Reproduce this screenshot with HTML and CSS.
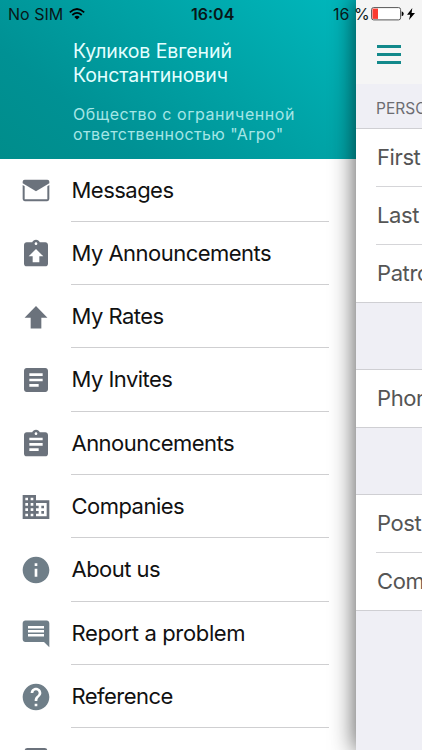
FILE: index.html
```html
<!DOCTYPE html>
<html lang="en">
<head>
<meta charset="utf-8">
<title>Menu</title>
<link rel="stylesheet" href="styles.css">
</head>
<body>
<div class="screen">
  <aside class="drawer">
    <header class="profile">
      <h1 class="name">Куликов Евгений<br>Константинович</h1>
      <p class="company"><span class="company-first">Общество с ограниченной</span><br>ответственностью "Агро"</p>
    </header>
    <nav class="menu">
      <a class="item"><svg class="icon" viewBox="0 0 24 24"><path d="M3.500 4.400h17q1.500 0 1.500 1.500v1L12 12.900 2 6.900v-1q0-1.500 1.500-1.500z"/><path d="M2 8.300l1.500.9v9.700h17V9.200l1.500-.9v10.500q0 1.600-1.600 1.600H3.600Q2 20.400 2 18.800z"/></svg><span class="label">Messages</span></a>
      <a class="item"><svg class="icon" viewBox="0 -1 24 24"><path d="M19 3h-4.18C14.4 1.84 13.3 1 12 1s-2.4.84-2.82 2H5c-1.1 0-2 .9-2 2v14c0 1.100.9 2 2 2h14c1.100 0 2-.9 2-2V5c0-1.100-.9-2-2-2zm-7 0c.55 0 1 .45 1 1s-.45 1-1 1-1-.45-1-1 .45-1 1-1zm2.500 10.500V18h-5v-4.500H6.500L12 8l5.500 5.500z"/></svg><span class="label">My Announcements</span></a>
      <a class="item"><svg class="icon" viewBox="0 0 24 24"><path d="M12 3.700l8.600 8.900H16v8H8v-8H3.400z"/></svg><span class="label">My Rates</span></a>
      <a class="item"><svg class="icon" viewBox="0 0 24 24"><path d="M19 3H5c-1.100 0-2 .9-2 2v14c0 1.100.9 2 2 2h14c1.100 0 2-.9 2-2V5c0-1.100-.9-2-2-2zm-5 14H7v-2h7v2zm3-4H7v-2h10v2zm0-4H7V7h10v2z"/></svg><span class="label">My Invites</span></a>
      <a class="item"><svg class="icon" viewBox="0 -1 24 24"><path d="M19 3h-4.180C14.400 1.840 13.300 1 12 1s-2.400.84-2.820 2H5c-1.100 0-2 .9-2 2v14c0 1.100.9 2 2 2h14c1.100 0 2-.9 2-2V5c0-1.100-.9-2-2-2zm-7 0c.55 0 1 .45 1 1s-.45 1-1 1-1-.45-1-1 .45-1 1-1zm2 14H7v-2h7v2zm3-4H7v-2h10v2zm0-4H7V7h10v2z"/></svg><span class="label">Announcements</span></a>
      <a class="item"><svg class="icon" viewBox="0 0 24 24"><path d="M12 7V3H2v18h20V7H12zM6 19H4v-2h2v2zm0-4H4v-2h2v2zm0-4H4V9h2v2zm0-4H4V5h2v2zm4 12H8v-2h2v2zm0-4H8v-2h2v2zm0-4H8V9h2v2zm0-4H8V5h2v2zm10 12h-8v-2h2v-2h-2v-2h2v-2h-2V9h8v10zm-2-8h-2v2h2v-2zm0 4h-2v2h2v-2z"/></svg><span class="label">Companies</span></a>
      <a class="item cool"><svg class="icon" viewBox="0 0 24 24"><path d="M12 2C6.480 2 2 6.480 2 12s4.480 10 10 10 10-4.480 10-10S17.520 2 12 2zm1 15h-2v-6h2v6zm0-8h-2V7h2v2z"/></svg><span class="label">About us</span></a>
      <a class="item cool"><svg class="icon" viewBox="0 -.7 24 24"><path d="M21.990 4c0-1.100-.89-2-1.990-2H4c-1.100 0-2 .9-2 2v12c0 1.100.9 2 2 2h14l4 4-.01-18zM18 14H6v-2h12v2zm0-3H6V9h12v2zm0-3H6V6h12v2z"/></svg><span class="label wide">Report a problem</span></a>
      <a class="item cool"><svg class="icon" viewBox="0 0 24 24"><path d="M12 2C6.480 2 2 6.480 2 12s4.480 10 10 10 10-4.480 10-10S17.520 2 12 2zm1 17h-2v-2h2v2zm2.070-7.750-.9.920C13.450 12.900 13 13.500 13 15h-2v-.5c0-1.100.45-2.100 1.170-2.830l1.240-1.260c.37-.36.590-.86.590-1.410 0-1.100-.9-2-2-2s-2 .9-2 2H8c0-2.210 1.790-4 4-4s4 1.790 4 4c0 .88-.36 1.680-.93 2.250z"/></svg><span class="label">Reference</span></a>
      <a class="item"><svg class="icon" viewBox="0 0 24 24"><path d="M5.500 3h13q2 0 2 2v14h-17V5q0-2 2-2z"/></svg><span class="label"></span></a>
    </nav>
  </aside>
  <main class="page">
    <div class="navbar"><div class="burger"><i></i><i></i><i></i></div></div>
    <h2 class="section">PERSONAL</h2>
    <div class="group"><div class="field">First name</div><div class="field">Last name</div><div class="field">Patronymic</div></div>
    <div class="group single"><div class="field">Phone</div></div>
    <div class="group"><div class="field">Post</div><div class="field">Company</div></div>
  </main>
  <div class="status">
    <span class="carrier">No SIM</span>
    <svg class="wifi" viewBox="0 0 16 12"><g fill="none" stroke="#000" stroke-width="1.700"><path d="M.8 4.300Q8-2.300 15.200 4.300"/><path d="M3.300 7Q8 2.800 12.700 7"/></g><path d="M5.300 8.900Q8 6.600 10.700 8.900L8 11.600z"/></svg>
    <span class="clock">16:04</span>
    <span class="percent">16 %</span>
    <svg class="battery" viewBox="0 0 33 14"><rect x=".6" y=".6" width="29" height="12.300" rx="2" fill="#fff" stroke="#555" stroke-width="1"/><rect x="1.500" y="1.600" width="5.500" height="10.300" fill="#fb3b30"/><path d="M30.700 4.300q2 .5 2 2.500t-2 2.500z"/></svg>
    <svg class="bolt" viewBox="0 0 8 12"><path d="M5.300 0 0 6.800h3.200L2 12l6-7H4.600z"/></svg>
  </div>
</div>
</body>
</html>
```

FILE: styles.css
```css
* { box-sizing: border-box; }
body { margin: 0; font-family: Inter, "Liberation Sans", sans-serif; color: #111; }
.screen { position: relative; display: flex; width: 422px; height: 750px; overflow: hidden; background: #fff; }
.drawer { width: 356px; flex: none; overflow: hidden; background: #fff; }
.profile {
  height: 158.500px;
  padding: 40px 0 0 73px;
  background: linear-gradient(38deg, #008d8b 0%, #009194 25%, #00a3a6 60%, #00b8bd 100%);
  color: #e4ffff;
}
.name { margin: 0; font-size: 19.500px; line-height: 23.500px; letter-spacing: -.1px; font-weight: 400; white-space: nowrap; }
.company { margin: 17px 0 0; font-size: 16px; line-height: 20.300px; letter-spacing: .4px; color: #a5e6e6; white-space: nowrap; }
.company-first { letter-spacing: .56px; }
.item { display: flex; align-items: center; height: 63.340px; padding-left: 20px; color: #6b727c; }
.item.cool { color: #6f7e88; }
.icon { width: 32px; height: 32px; flex: none; fill: currentColor; }
.label {
  width: 258px; height: 100%; margin-left: 19px; padding-left: .5px;
  border-bottom: 1px solid #cfcfd1;
  font-size: 22px; line-height: 63px; letter-spacing: -.53px; color: #111; white-space: nowrap;
}
.label.wide { letter-spacing: -.35px; }
.page {
  position: relative; width: 66px; flex: none; background: #efeff5;
  box-shadow: 0 0 24px 1px rgba(0,0,0,.65);
}
.navbar { height: 84px; padding: 45px 0 0 21px; background: #f5f5f5; }
.burger { display: grid; gap: 5px; width: 24px; }
.burger i { height: 3px; background: #12898b; }
.section {
  height: 44px; margin: 0; padding-left: 20px; overflow: hidden;
  font-size: 15.500px; line-height: 50px; font-weight: 400; color: #6c6c71;
}
.group { border: solid #cfcfd3; border-width: 1px 0; background: #fff; overflow: hidden; }
.single { margin: 66px 0; }
.field { height: 57px; margin-left: 20px; padding-left: 1px; font-size: 22px; line-height: 56px; letter-spacing: -.4px; color: #555; white-space: nowrap; }
.field + .field { height: 58px; border-top: 1px solid #d5d5d8; }
.status { position: absolute; inset: 0 0 auto; height: 28px; display: flex; align-items: center; font-size: 16px; line-height: 28px; white-space: nowrap; color: #081718; }
.carrier { width: 60px; margin-left: 8px; }
.wifi { width: 16px; height: 12px; margin-left: 1px; }
.clock { margin-left: 106px; width: 52px; font-weight: 600; }
.percent { width: 38px; margin-left: 90px; }
.battery { width: 33px; height: 14px; }
.bolt { width: 8px; height: 12px; margin-left: 3px; }
```
